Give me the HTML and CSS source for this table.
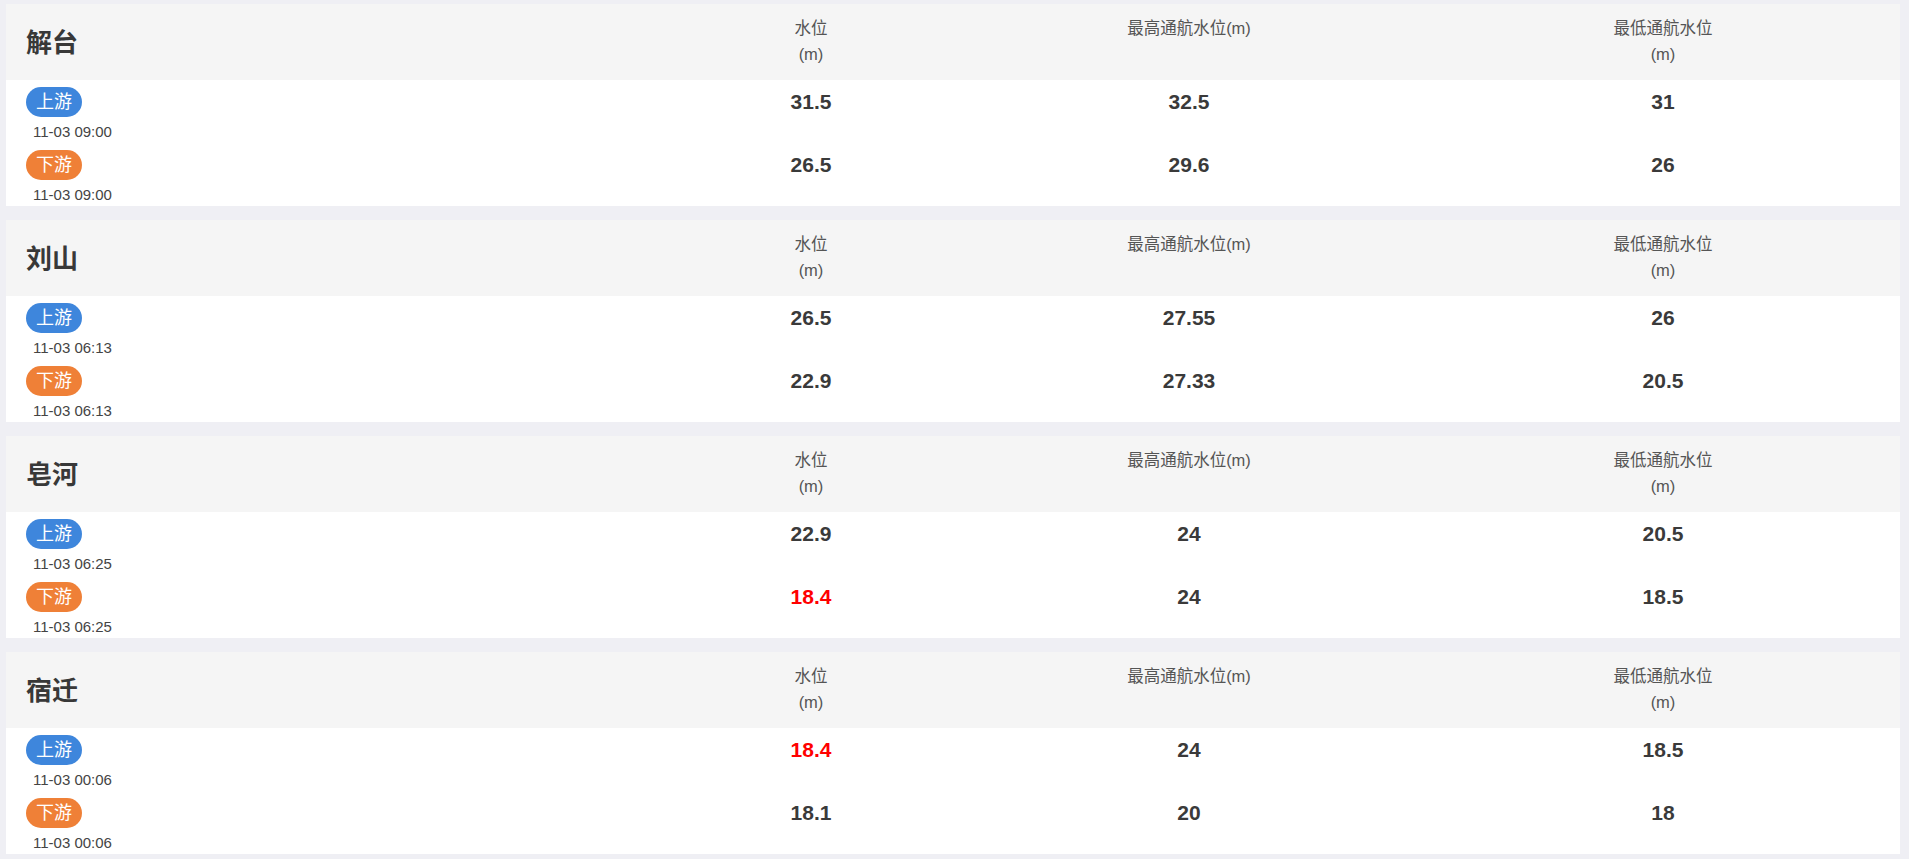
FILE: index.html
```html
<!DOCTYPE html>
<html lang="zh-CN">
<head>
<meta charset="utf-8">
<title>水位</title>
<link rel="stylesheet" href="styles.css">
</head>
<body>
<div class="page">
  <section class="card">
    <div class="head">
      <div class="title">解台</div>
      <div class="label">水位<br>(m)</div>
      <div class="label">最高通航水位(m)</div>
      <div class="label">最低通航水位<br>(m)</div>
    </div>
    <div class="row">
      <div class="side"><span class="badge up">上游</span><div class="time">11-03 09:00</div></div>
      <div class="val">31.5</div><div class="val">32.5</div><div class="val">31</div>
    </div>
    <div class="row">
      <div class="side"><span class="badge down">下游</span><div class="time">11-03 09:00</div></div>
      <div class="val">26.5</div><div class="val">29.6</div><div class="val">26</div>
    </div>
  </section>
  <section class="card">
    <div class="head">
      <div class="title">刘山</div>
      <div class="label">水位<br>(m)</div>
      <div class="label">最高通航水位(m)</div>
      <div class="label">最低通航水位<br>(m)</div>
    </div>
    <div class="row">
      <div class="side"><span class="badge up">上游</span><div class="time">11-03 06:13</div></div>
      <div class="val">26.5</div><div class="val">27.55</div><div class="val">26</div>
    </div>
    <div class="row">
      <div class="side"><span class="badge down">下游</span><div class="time">11-03 06:13</div></div>
      <div class="val">22.9</div><div class="val">27.33</div><div class="val">20.5</div>
    </div>
  </section>
  <section class="card">
    <div class="head">
      <div class="title">皂河</div>
      <div class="label">水位<br>(m)</div>
      <div class="label">最高通航水位(m)</div>
      <div class="label">最低通航水位<br>(m)</div>
    </div>
    <div class="row">
      <div class="side"><span class="badge up">上游</span><div class="time">11-03 06:25</div></div>
      <div class="val">22.9</div><div class="val">24</div><div class="val">20.5</div>
    </div>
    <div class="row">
      <div class="side"><span class="badge down">下游</span><div class="time">11-03 06:25</div></div>
      <div class="val warn">18.4</div><div class="val">24</div><div class="val">18.5</div>
    </div>
  </section>
  <section class="card">
    <div class="head">
      <div class="title">宿迁</div>
      <div class="label">水位<br>(m)</div>
      <div class="label">最高通航水位(m)</div>
      <div class="label">最低通航水位<br>(m)</div>
    </div>
    <div class="row">
      <div class="side"><span class="badge up">上游</span><div class="time">11-03 00:06</div></div>
      <div class="val warn">18.4</div><div class="val">24</div><div class="val">18.5</div>
    </div>
    <div class="row">
      <div class="side"><span class="badge down">下游</span><div class="time">11-03 00:06</div></div>
      <div class="val">18.1</div><div class="val">20</div><div class="val">18</div>
    </div>
  </section>
</div>
</body>
</html>
```
FILE: styles.css
```css
html, body {
  margin: 0;
  padding: 0;
  background: #efeff4;
  font-family: "Liberation Sans", "Noto Sans CJK SC", sans-serif;
  color: #333;
}
.page {
  padding: 4px 9px 4px 6px;
  display: flex;
  flex-direction: column;
  gap: 14px;
}
.card {
  background: #fff;
}
.head, .row {
  display: grid;
  grid-template-columns: 664fr 282fr 474fr 474fr;
}
.head {
  background: #f5f5f5;
  height: 76px;
}
.title {
  align-self: center;
  padding-left: 20px;
  font-size: 26px;
  font-weight: bold;
  color: #383838;
  line-height: 1;
  margin-top: 2px;
}
.label {
  text-align: center;
  font-size: 16.5px;
  line-height: 26px;
  padding-top: 11px;
  color: #555;
}
.row {
  height: 63px;
}
.side {
  padding: 7px 0 0 20px;
}
.badge {
  display: inline-block;
  height: 30px;
  line-height: 30px;
  padding: 0 10px;
  border-radius: 15px;
  color: #fff;
  font-size: 18px;
}
.badge.up { background: #3e86dc; }
.badge.down { background: #ef8037; }
.time {
  margin: 5px 0 0 7px;
  font-size: 15px;
  line-height: 20px;
  color: #444;
}
.val {
  text-align: center;
  padding-top: 7px;
  line-height: 30px;
  font-size: 21px;
  font-weight: bold;
  color: #3a3a3a;
}
.val.warn { color: #ff0000; }
```
